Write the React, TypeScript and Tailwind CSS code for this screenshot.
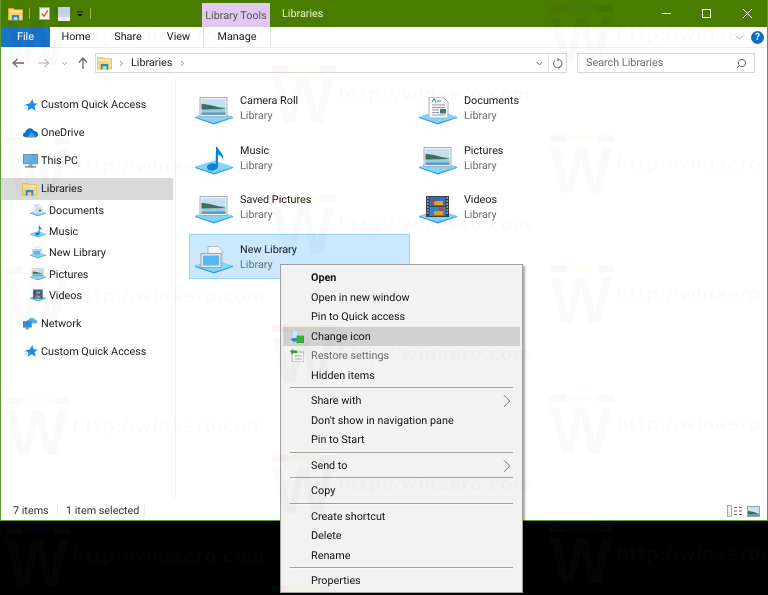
import { ChevronDown, ChevronRight, Search } from "lucide-react";

type LibKind = "picture" | "music" | "docs" | "film" | "new";

const libraries: { name: string; kind: LibKind; selected?: boolean }[] = [
  { name: "Camera Roll", kind: "picture" },
  { name: "Documents", kind: "docs" },
  { name: "Music", kind: "music" },
  { name: "Pictures", kind: "picture" },
  { name: "Saved Pictures", kind: "picture" },
  { name: "Videos", kind: "film" },
  { name: "New Library", kind: "new", selected: true },
];

const menuGroups: { label: string; bold?: boolean; disabled?: boolean; hover?: boolean; arrow?: boolean; icon?: "change" | "restore" }[][] = [
  [
    { label: "Open", bold: true },
    { label: "Open in new window" },
    { label: "Pin to Quick access" },
    { label: "Change icon", hover: true, icon: "change" },
    { label: "Restore settings", disabled: true, icon: "restore" },
    { label: "Hidden items" },
  ],
  [
    { label: "Share with", arrow: true },
    { label: "Don't show in navigation pane" },
    { label: "Pin to Start" },
  ],
  [{ label: "Send to", arrow: true }],
  [{ label: "Copy" }],
  [{ label: "Create shortcut" }, { label: "Delete" }, { label: "Rename" }],
  [{ label: "Properties" }],
];

// watermark stamps, top-left of each logo
const stamps = [
  [6, 7], [6, 137], [6, 267], [6, 397], [6, 527],
  [272, 65], [272, 195], [272, 325], [272, 455], [272, 585],
  [550, 5], [550, 135], [550, 265], [550, 395], [550, 525],
];

function Landscape({ x, y, w, h }: { x: number; y: number; w: number; h: number }) {
  return (
    <g>
      <rect x={x - 1.5} y={y - 1.5} width={w + 3} height={h + 3} fill="#f4f4f4" stroke="#a9adb0" strokeWidth="1" />
      <rect x={x} y={y} width={w} height={h * 0.5} fill="#c4e0ee" />
      <rect x={x} y={y + h * 0.5} width={w} height={h * 0.5} fill="#9ccbe0" />
      <path d={`M${x} ${y + h * 0.3} L${x + w * 0.35} ${y + h * 0.38} L${x + w} ${y + h * 0.62} L${x} ${y + h * 0.66} Z`} fill="#3b6f66" />
      <rect x={x} y={y + h * 0.84} width={w} height={h * 0.16} fill="#5f9cc0" />
    </g>
  );
}

function LibIcon({ kind, className }: { kind: LibKind; className: string }) {
  return (
    <svg viewBox="0 0 38 28" className={className}>
      <path d="M0 20 L19 14 L38 20 V21 L19 27.5 L0 21 Z" fill="#2aa2e8" />
      <path d="M0 20 L19 13.5 L38 20 L19 26 Z" fill="#86d3fb" />
      {kind === "picture" && <Landscape x={6.5} y={2} w={24} h={16} />}
      {kind === "music" && (
        <path
          d="M21 0 h1.6 c.6 4 6.8 6 5.6 13 c-.5-3-2.6-5-5.2-5.6 V19 c0 2.8-3 4.6-6.2 4.6 c-3 0-4.8-1.4-4.8-3.4 c0-2.4 2.8-4 5.6-4 c1.2 0 2.2.2 3 .7 Z"
          fill="#0a84d8"
        />
      )}
      {kind === "docs" && (
        <g>
          <path d="M10 0 H24 L29 5 V21 H10 Z" fill="#fafafa" stroke="#a6b0b8" strokeWidth="1" />
          <path d="M13 5.5 L15 1.5 L17 5.5 M18 4 H22" fill="none" stroke="#2f7fc8" strokeWidth="1" />
          <path d="M13 8 H26 M13 10.5 H26 M13 13 H20 M13 15.5 H20 M13 18 H26" stroke="#8d97a0" strokeWidth="1" />
          <rect x="21" y="12" width="6" height="4.5" fill="#3f7a70" />
        </g>
      )}
      {kind === "film" && (
        <g>
          <rect x="7" y="0" width="23" height="21" fill="#3a4048" />
          <rect x="10.5" y="1" width="16" height="9" fill="#2c6fc4" />
          <rect x="10.5" y="11" width="16" height="9" fill="#2f83d8" />
          <path d="M15 5 h9 v4 h-9 Z M15 15 h9 v4 h-9 Z" fill="#e0a020" />
          <path d="M12 3 h4 v3 h-4 Z M20 12 h4 v3 h-4 Z" fill="#c23c28" />
          <path d="M8 2 h1.5 M8 5 h1.5 M8 8 h1.5 M8 11 h1.5 M8 14 h1.5 M8 17 h1.5 M27.5 2 h1.5 M27.5 5 h1.5 M27.5 8 h1.5 M27.5 11 h1.5 M27.5 14 h1.5 M27.5 17 h1.5" stroke="#e8e8e8" strokeWidth="1.2" />
        </g>
      )}
      {kind === "new" && (
        <g>
          <path d="M13 0.5 H23 L27 4.5 V16 H13 Z" fill="#f6f7f8" stroke="#b4bbc1" strokeWidth="1" />
          <rect x="6" y="7.5" width="20" height="14" fill="#e6eaed" stroke="#9aa3a9" strokeWidth="1" />
          <rect x="8" y="9.5" width="16" height="10" fill="#58b6f2" />
        </g>
      )}
    </svg>
  );
}

function FolderIcon({ className }: { className: string }) {
  return (
    <svg viewBox="0 0 16 15" className={className}>
      <path d="M.5 1.5 H6 L7.5 3 H15.5 V14 H.5 Z" fill="#fbd87a" stroke="#e3b54f" strokeWidth=".8" />
      <rect x="1" y="4" width="14" height="1.2" fill="#fff0c2" />
      <path d="M4 14.5 V8.5 H12 V14.5 H10 V11 H6 V14.5 Z" fill="#1e8fdc" />
    </svg>
  );
}

function StarIcon() {
  return (
    <svg viewBox="0 0 16 16" className="w-[14px] h-[14px]">
      <path d="M9.5 1 L11 6 L15.5 6.3 L12 9.5 L13.5 14.5 L8.8 11.8 L4 14.5 L5.2 10 L1.5 7.5 L6.8 6 Z" fill="#1f8ddb" />
      <path d="M0 9 h3 M1 12 h2" stroke="#86c4ee" strokeWidth="1" />
    </svg>
  );
}

function NavIcon({ name }: { name: string }) {
  if (name === "star") return <StarIcon />;
  if (name === "cloud")
    return (
      <svg viewBox="0 0 16 11" className="w-[15px] h-[11px]">
        <path d="M3.2 10.5 C.8 10.5 0 9 0 7.8 C0 6.2 1.3 5.2 2.6 5.2 C3.2 2.8 5 1 7.4 1 C9.4 1 10.8 2 11.6 3.8 C14 3.6 16 5.4 16 7.6 C16 9.4 14.8 10.5 13 10.5 Z" fill="#0f6fc6" />
        <path d="M4 10.5 L9 5 L14.5 10.5 Z" fill="#3f9ae0" />
      </svg>
    );
  if (name === "pc")
    return (
      <svg viewBox="0 0 16 15" className="w-[15px] h-[14px]">
        <rect x=".5" y=".5" width="15" height="10" fill="#5db5ea" stroke="#7f8a92" />
        <rect x="6" y="11" width="4" height="2" fill="#9aa3aa" />
        <rect x="2" y="13" width="12" height="1.5" fill="#78838b" />
      </svg>
    );
  if (name === "net")
    return (
      <svg viewBox="0 0 16 15" className="w-[15px] h-[14px]">
        <path d="M6 8 C3 8 3 4 6 4 C7 1 12 1 13 4 C16 4 16 8 13 8 Z" fill="#5daee6" />
        <rect x="0" y="6" width="9" height="6" fill="#2f8ed6" stroke="#6f7f8a" strokeWidth=".6" />
        <rect x="3" y="12" width="3" height="2.5" fill="#7f8a92" />
      </svg>
    );
  return null;
}

function NavRow({ label, icon }: { label: string; icon: string }) {
  return (
    <div className="flex items-center h-[21px] pl-[22px] gap-[3px]">
      <span className="w-[15px] flex justify-center shrink-0">
        <NavIcon name={icon} />
      </span>
      <span className="pt-[1px]">{label}</span>
    </div>
  );
}

function NavChild({ label, kind }: { label: string; kind: LibKind }) {
  return (
    <div className="flex items-center h-[21.2px] pl-[29px] gap-[3px]">
      <LibIcon kind={kind} className="w-[16px] h-[15px] shrink-0" />
      <span className="pt-[1px]">{label}</span>
    </div>
  );
}

function LibraryItem({ name, kind, selected }: { name: string; kind: LibKind; selected?: boolean }) {
  return (
    <div className={`flex h-[45.5px] ${selected ? "bg-[#cce8ff] border border-[#99d1ff] pl-[5px] pt-[2px]" : "pl-[6px] pt-[3px]"} gap-[7px]`}>
      <div className="w-[38px] pt-[9px] shrink-0">
        <LibIcon kind={kind} className="w-[38px] h-[28px]" />
      </div>
      <div className="flex flex-col leading-[15px] pt-[5px]">
        <span className="text-[#1a1a1a]">{name}</span>
        <span className="text-[#6d6d6d]">Library</span>
      </div>
    </div>
  );
}

function MenuIcon({ kind }: { kind: "change" | "restore" }) {
  if (kind === "change")
    return (
      <svg viewBox="0 0 14 13" className="w-[14px] h-[13px]">
        <rect x="2" y="0" width="6" height="8" fill="#cfe6f7" stroke="#9fb5c5" strokeWidth=".6" />
        <path d="M0 9 L5 8 L9 10 L4 12 Z" fill="#2a87cf" />
        <rect x="7" y="6" width="7" height="7" fill="#2fc03a" stroke="#1a8f2a" strokeWidth=".6" />
      </svg>
    );
  return (
    <svg viewBox="0 0 14 13" className="w-[14px] h-[13px]">
      <rect x="2" y="3" width="12" height="10" fill="#f8f8f8" stroke="#8a8f93" strokeWidth=".7" />
      <path d="M5 7 h7 M5 10 h7" stroke="#8aa0b0" strokeWidth=".8" />
      <path d="M0 2.5 L3 0 V1.5 H7 V4 H3 V5.5 Z" fill="#2e9e3c" />
    </svg>
  );
}

function ContextMenu() {
  return (
    <div className="absolute left-[280px] top-[264px] w-[243px] bg-[#f2f2f2] border border-[#a0a0a0] shadow-[2px_2px_2px_rgba(0,0,0,0.35)] pt-[3px] pb-[1px] px-[2px] text-[#111]">
      {menuGroups.map((group, i) => (
        <div key={i}>
          {i > 0 && <div className="mx-[7px] h-[2px] border-t border-[#a0a0a0] bg-[#f8f8f8] mt-[2px] mb-[2px]" />}
          {group.map((item) => (
            <div
              key={item.label}
              className={`relative flex items-center h-[19.5px] pl-[28px] pt-[1px] ${item.hover ? "bg-[#d1d1d1]" : ""} ${item.bold ? "font-bold" : ""} ${item.disabled ? "text-[#6d6d6d]" : ""}`}
            >
              {item.icon && (
                <span className="absolute left-[7px] top-[3px]">
                  <MenuIcon kind={item.icon} />
                </span>
              )}
              {item.label}
              {item.arrow && <ChevronRight className="absolute right-[2px] top-[-1px] w-[22px] h-[22px] text-[#555]" strokeWidth={0.9} />}
            </div>
          ))}
        </div>
      ))}
    </div>
  );
}

function Watermark({ x, y }: { x: number; y: number }) {
  return (
    <div className="absolute w-[270px] h-[70px] pointer-events-none" style={{ left: x, top: y }}>
      <div className="flex h-[7px] w-[64px]">
        <span className="flex-1 bg-[#010808]" />
        <span className="flex-1 bg-[#010208]" />
        <span className="flex-1 bg-[#010208]" />
        <span className="flex-1 bg-[#080401]" />
      </div>
      <span className="absolute left-0 top-[2px] font-['Liberation_Sans',sans-serif] font-bold text-[66px] leading-[66px] text-[#050505]">W</span>
      <span className="absolute left-[66px] top-[18px] font-['DejaVu_Sans',sans-serif] font-bold text-[18px] leading-[24px] text-[#040404] whitespace-nowrap">http://winaero.com</span>
    </div>
  );
}

export default function App() {
  return (
    <div className="relative w-[768px] h-[595px] overflow-hidden bg-black font-['Roboto',sans-serif] text-[10.8px] [text-rendering:geometricPrecision] text-[#1a1a1a]">
      <div className="h-[521px] flex flex-col bg-white border-x border-b border-[#5f9a2e]">
        {/* title bar */}
        <div className="h-[27px] shrink-0 bg-[#4a7c00] flex items-center relative text-white">
          <FolderIcon className="ml-[7px] w-[15px] h-[14px]" />
          <span className="ml-[6px] w-px h-[11px] bg-[#9ab56b]" />
          <svg viewBox="0 0 12 14" className="ml-[9px] w-[11px] h-[13px]">
            <rect x=".5" y=".5" width="11" height="13" fill="#f4f4f4" stroke="#aaa" />
            <path d="M3 7 L5.5 10 L9.5 3.5" stroke="#d2502a" strokeWidth="1.4" fill="none" />
          </svg>
          <svg viewBox="0 0 12 14" className="ml-[8px] w-[12px] h-[14px]">
            <rect width="12" height="14" fill="#c5d6ea" />
            <rect x="0" y="10" width="12" height="4" fill="#e9eef4" />
          </svg>
          <svg viewBox="0 0 7 6" className="ml-[7px] w-[6px] h-[6px]">
            <path d="M0 0 H7 V1 H0 Z M0 3 H7 L3.5 6 Z" fill="#111" />
          </svg>
          <span className="ml-[7px] w-px h-[11px] bg-[#9ab56b]" />
          <div className="ml-[111px] self-end h-[24px] w-[68px] bg-[#e2c8f5] text-[#4d5a45] flex items-center justify-center pt-[3px]">
            Library Tools
          </div>
          <span className="ml-[12px] text-[#e8f0da] pt-[1px]">Libraries</span>
          <div className="ml-auto flex items-center">
            <span className="w-[9px] h-px bg-white mr-[31px]" />
            <span className="w-[9px] h-[9px] border border-white mr-[32px]" />
            <svg viewBox="0 0 9 9" className="w-[9px] h-[9px] mr-[15px]">
              <path d="M0 0 L9 9 M9 0 L0 9" stroke="white" strokeWidth="1" />
            </svg>
          </div>
        </div>

        {/* ribbon tabs */}
        <div className="h-[21px] shrink-0 flex items-center border-b border-[#ececec]">
          <div className="w-[49px] h-full bg-[#1b74c8] text-white flex items-center justify-center pt-[1px]">File</div>
          <span className="w-[52px] text-center pt-[1px]">Home</span>
          <span className="w-[52px] text-center pt-[1px]">Share</span>
          <span className="w-[49px] text-center pt-[1px]">View</span>
          <div className="h-full w-[68px] border-x border-[#e4e4e4] flex items-center justify-center pt-[1px]">Manage</div>
          <ChevronDown className="ml-auto w-[13px] h-[13px] text-[#8a8a8a]" strokeWidth={1.2} />
          <span className="ml-[5px] mr-[3px] w-[13px] h-[13px] rounded-full bg-[#0f6cc4] text-white text-[10px] font-bold flex items-center justify-center">?</span>
        </div>

        {/* address row */}
        <div className="h-[30px] shrink-0 flex items-center">
          <svg viewBox="0 0 12 10" className="ml-[11px] w-[12px] h-[10px]">
            <path d="M5.5 1 L1 5 L5.5 9 M1 5 H12" stroke="#6b6b6b" strokeWidth="1.3" fill="none" />
          </svg>
          <svg viewBox="0 0 12 10" className="ml-[14px] w-[12px] h-[10px]">
            <path d="M6.5 1 L11 5 L6.5 9 M11 5 H0" stroke="#c9c9c9" strokeWidth="1.3" fill="none" />
          </svg>
          <ChevronDown className="ml-[10px] w-[9px] h-[9px] text-[#8d8d8d]" strokeWidth={2.2} />
          <svg viewBox="0 0 10 12" className="ml-[9px] w-[10px] h-[12px]">
            <path d="M1 5.5 L5 1 L9 5.5 M5 1 V12" stroke="#6b6b6b" strokeWidth="1.3" fill="none" />
          </svg>
          <div className="ml-[7px] w-[472px] h-[20px] border border-[#d9d9d9] flex items-center">
            <FolderIcon className="ml-[1px] w-[15px] h-[14px]" />
            <ChevronRight className="ml-[5px] w-[9px] h-[9px] text-[#666]" />
            <span className="ml-[5px] pt-[1px]">Libraries</span>
            <ChevronRight className="ml-[6px] w-[9px] h-[9px] text-[#666]" />
            <ChevronDown className="ml-auto w-[11px] h-[11px] text-[#555]" strokeWidth={2} />
            <span className="ml-[3px] w-px h-full bg-[#e2e2e2]" />
            <svg viewBox="0 0 12 12" className="mx-[3px] w-[11px] h-[11px]">
              <path d="M7 1.5 A4.6 4.6 0 1 1 3 2.8 M5.5 .3 L7.5 1.7 L5.8 3.5" stroke="#6b6b6b" strokeWidth="1.1" fill="none" />
            </svg>
          </div>
          <div className="ml-[10px] w-[178px] h-[20px] border border-[#d9d9d9] flex items-center pl-[8px] pt-[1px] text-[#6d6d6d]">
            Search Libraries
            <Search className="ml-auto mr-[7px] w-[11px] h-[11px] text-[#555] -scale-x-100" strokeWidth={2} />
          </div>
        </div>

        {/* main */}
        <div className="flex-1 flex min-h-0">
          <div className="w-[175px] shrink-0 border-r border-[#f0f0f0] pt-[16px]">
            <NavRow label="Custom Quick Access" icon="star" />
            <div className="h-[7px]" />
            <NavRow label="OneDrive" icon="cloud" />
            <div className="h-[7px]" />
            <NavRow label="This PC" icon="pc" />
            <div className="h-[7px]" />
            <div className="flex items-center h-[22px] pl-[21px] gap-[4px] bg-[#d9d9d9] mr-[2px]">
              <FolderIcon className="w-[15px] h-[14px]" />
              <span className="pt-[1px]">Libraries</span>
            </div>
            <NavChild label="Documents" kind="docs" />
            <NavChild label="Music" kind="music" />
            <NavChild label="New Library" kind="new" />
            <NavChild label="Pictures" kind="picture" />
            <NavChild label="Videos" kind="film" />
            <div className="h-[7px]" />
            <NavRow label="Network" icon="net" />
            <div className="h-[7px]" />
            <NavRow label="Custom Quick Access" icon="star" />
          </div>
          <div className="flex-1 pl-[13px] pt-[7px]">
            <div className="grid grid-cols-[221px_221px] gap-x-[3px] gap-y-[4px]">
              {libraries.map((lib) => (
                <LibraryItem key={lib.name} name={lib.name} kind={lib.kind} selected={lib.selected} />
              ))}
            </div>
          </div>
        </div>

        {/* status bar */}
        <div className="h-[22px] shrink-0 flex items-center pl-[12px] pt-[4px] text-[#333] relative">
          <span className="w-[44px]">7 items</span>
          <span className="w-px h-[14px] bg-[#ececec]" />
          <span className="ml-[8px] w-[78px]">1 item selected</span>
          <span className="w-px h-[14px] bg-[#ececec]" />
          <div className="ml-auto mr-[7px] flex items-center gap-[5px]">
            <svg viewBox="0 0 15 12" className="w-[15px] h-[12px]">
              <rect x=".5" y=".5" width="4" height="11" fill="#f0f0f0" stroke="#9a9a9a" strokeWidth=".8" />
              <path d="M7 2.5 h3 M12 2.5 h3 M7 6 h3 M12 6 h3 M7 9.5 h3 M12 9.5 h3" stroke="#707070" strokeWidth="1" />
            </svg>
            <svg viewBox="0 0 13 11" className="w-[13px] h-[11px]">
              <rect x=".5" y=".5" width="12" height="10" fill="#cfe3ee" stroke="#a0a0a0" />
              <path d="M1 5 L7 6 L12 8 H1 Z" fill="#37685f" />
              <rect x="1" y="8" width="11" height="2" fill="#5f9cc0" />
            </svg>
          </div>
        </div>
      </div>

      <ContextMenu />

      {/* faint site stamps over everything */}
      <div className="absolute inset-0 mix-blend-difference pointer-events-none">
        {stamps.map(([x, y]) => (
          <Watermark key={`${x}-${y}`} x={x} y={y} />
        ))}
      </div>
    </div>
  );
}
